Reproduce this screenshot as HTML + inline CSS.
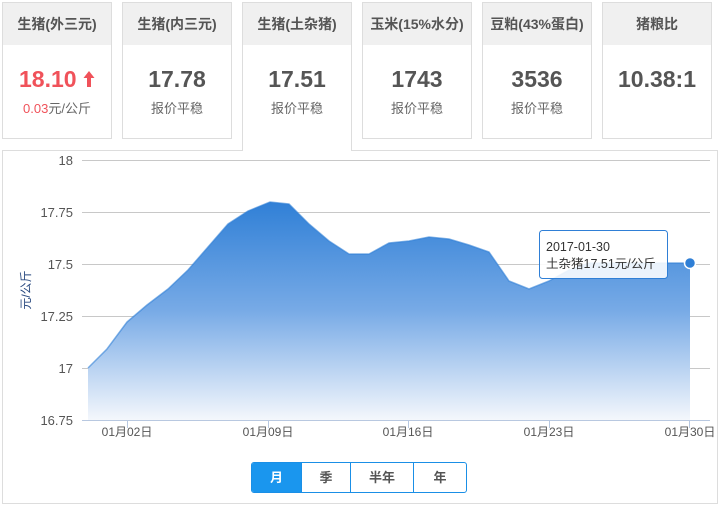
<!DOCTYPE html>
<html><head><meta charset="utf-8"><style>
*{margin:0;padding:0;box-sizing:border-box}
body{width:720px;height:507px;background:#fff;font-family:"Liberation Sans","Noto Sans CJK SC",sans-serif;position:relative;overflow:hidden;color:#555}
.card{position:absolute;top:2px;width:110px;height:137px;border:1px solid #ddd;background:#fff;text-align:center}
.card .h{height:42px;background:#f0f0f0;line-height:42px;font-size:14px;font-weight:bold;color:#555}
.card .v{font-size:23px;font-weight:bold;color:#555;margin-top:20px;line-height:28px}
.card .s{font-size:13px;color:#666;margin-top:5px}
.card.act{height:149px;border-bottom:none;z-index:2}
.chart{position:absolute;left:2px;top:150px;width:716px;height:354px;border:1px solid #ddd}
.btns{position:absolute;left:251px;top:462px;height:31px;display:flex;border:1px solid #1a8fe6;border-radius:3px;overflow:hidden}
.btns div{height:29px;line-height:29px;text-align:center;font-size:13px;font-weight:bold;color:#555;border-left:1px solid #1a8fe6}
.btns div:first-child{border-left:none;background:#1a96ee;color:#fff}
</style></head><body>
<div class="card" style="left:2px"><div class="h">生猪(外三元)</div><div class="v" style="color:#f0525a">18.10 <svg width="12" height="18" viewBox="0 0 12 18" style="vertical-align:-1px"><path d="M6 1 L11.5 8 L8 8 L8 17 L4 17 L4 8 L0.5 8 Z" fill="#f0525a"/></svg></div><div class="s"><span style="color:#f0525a">0.03</span>元/公斤</div></div>
<div class="card" style="left:122px"><div class="h">生猪(内三元)</div><div class="v">17.78</div><div class="s">报价平稳</div></div>
<div class="card act" style="left:242px"><div class="h">生猪(土杂猪)</div><div class="v">17.51</div><div class="s">报价平稳</div></div>
<div class="card" style="left:362px"><div class="h">玉米(15%水分)</div><div class="v">1743</div><div class="s">报价平稳</div></div>
<div class="card" style="left:482px"><div class="h">豆粕(43%蛋白)</div><div class="v">3536</div><div class="s">报价平稳</div></div>
<div class="card" style="left:602px"><div class="h">猪粮比</div><div class="v">10.38:1</div></div>
<div class="chart"></div>
<svg style="position:absolute;left:0;top:0" width="720" height="507">
<defs><linearGradient id="g2" x1="0" y1="200" x2="0" y2="420" gradientUnits="userSpaceOnUse"><stop offset="0" stop-color="#2f7fd6"/><stop offset="0.5" stop-color="#77aae6"/><stop offset="1" stop-color="#f4f7fc"/></linearGradient></defs>
<g stroke="#c8c8c8" stroke-width="1">
<line x1="82" y1="160.5" x2="710" y2="160.5"/><line x1="82" y1="212.5" x2="710" y2="212.5"/><line x1="82" y1="264.5" x2="710" y2="264.5"/><line x1="82" y1="316.5" x2="710" y2="316.5"/><line x1="82" y1="368.5" x2="710" y2="368.5"/></g>
<path d="M88,368 L107,349 L127,322 L147,305 L168,289 L188,270 L208,247 L228,224 L248,211 L270,202 L289,204 L309,224 L329,241 L349,254 L369,254 L389,243 L409,241 L429,237 L449,239 L469,245 L489,252 L509,281 L529,289 L549,281 L569,270 L589,263 L690,263 L690,420 L88,420 Z" fill="url(#g2)"/>
<path d="M88,368 L107,349 L127,322 L147,305 L168,289 L188,270 L208,247 L228,224 L248,211 L270,202 L289,204 L309,224 L329,241 L349,254 L369,254 L389,243 L409,241 L429,237 L449,239 L469,245 L489,252 L509,281 L529,289 L549,281 L569,270 L589,263 L690,263" fill="none" stroke="#2f7fd6" stroke-width="1.5" opacity="0.6"/>
<line x1="82" y1="420.5" x2="710" y2="420.5" stroke="#b8c8e0"/>
<g stroke="#b8c8e0"><line x1="127.5" y1="420" x2="127.5" y2="428"/><line x1="268.5" y1="420" x2="268.5" y2="428"/><line x1="408.5" y1="420" x2="408.5" y2="428"/><line x1="549.5" y1="420" x2="549.5" y2="428"/><line x1="689.5" y1="420" x2="689.5" y2="428"/></g>
<circle cx="690" cy="263" r="5.5" fill="#2f7fd6" stroke="#fff" stroke-width="1.5"/>
<g font-size="13" fill="#555" text-anchor="end" font-family="Liberation Sans,sans-serif">
<text x="73" y="165">18</text><text x="73" y="217">17.75</text><text x="73" y="269">17.5</text><text x="73" y="321">17.25</text><text x="73" y="373">17</text><text x="73" y="425">16.75</text></g>
<g font-size="12" fill="#555" text-anchor="middle" font-family="Liberation Sans,Noto Sans CJK SC,sans-serif">
<text x="127" y="436">01月02日</text><text x="268" y="436">01月09日</text><text x="408" y="436">01月16日</text><text x="549" y="436">01月23日</text><text x="690" y="436">01月30日</text></g>
<text transform="translate(30,290) rotate(-90)" font-size="12" fill="#2a4a80" text-anchor="middle" font-family="Liberation Sans,Noto Sans CJK SC,sans-serif">元/公斤</text>
<rect x="539.5" y="230.5" width="128" height="48" rx="3" fill="#fff" fill-opacity="0.88" stroke="#2f7fd6"/>
<g font-size="12.5" fill="#333" font-family="Liberation Sans,Noto Sans CJK SC,sans-serif"><text x="546" y="251">2017-01-30</text><text x="546" y="268">土杂猪17.51元/公斤</text></g>
</svg>
<div class="btns"><div style="width:49px">月</div><div style="width:49px">季</div><div style="width:63px">半年</div><div style="width:53px">年</div></div>
</body></html>
